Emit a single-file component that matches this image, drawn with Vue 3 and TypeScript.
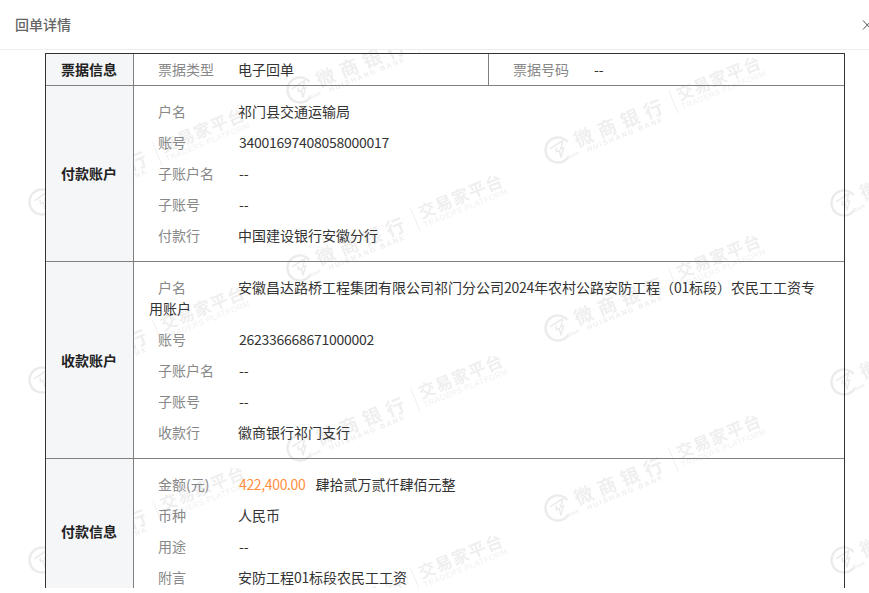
<script setup lang="ts">
interface Field {
  label: string
  value: string
}
interface Section {
  title: string
  fields: Field[]
}

const payer: Field[] = [
  { label: '户名', value: '祁门县交通运输局' },
  { label: '账号', value: '34001697408058000017' },
  { label: '子账户名', value: '--' },
  { label: '子账号', value: '--' },
  { label: '付款行', value: '中国建设银行安徽分行' },
]
const payee: Field[] = [
  { label: '账号', value: '262336668671000002' },
  { label: '子账户名', value: '--' },
  { label: '子账号', value: '--' },
  { label: '收款行', value: '徽商银行祁门支行' },
]
const sections: Section[] = [{ title: '付款账户', fields: payer }]

const marks: [number, number][] = [
  [300, 40], [558, 100], [844, 153],
  [42, 152], [300, 218], [558, 278], [844, 332],
  [42, 330], [300, 398], [558, 458], [844, 510],
  [42, 510], [300, 578],
]
const valueClass = (v: string) => ({
  num: /^[0-9]+$/.test(v),
  cjk: /^[^0-9-]/.test(v),
})
</script>

<template>
  <div class="dialog">
    <header class="head">
      <span class="title">回单详情</span>
      <svg class="close" width="7" height="12" viewBox="0 0 7 12" aria-label="关闭">
        <path d="M1 1.5L9.5 10.5M1 10.5L9.5 1.5" fill="none" stroke="#555" stroke-width="1" />
      </svg>
    </header>
    <main class="body">
      <svg class="marks" width="869" height="538" aria-hidden="true">
        <g v-for="(m, i) in marks" :key="i" :transform="`translate(${m[0]} ${m[1]}) rotate(-22)`">
          <circle r="12.5" fill="none" stroke="#ebebeb" stroke-width="2.4" stroke-dasharray="62 16" stroke-dashoffset="-12" />
          <path d="M-7-4L8-7L3 0L6 0L0 8L1 1L-2 1L-1-3" fill="none" stroke="#ebebeb" stroke-width="1.5" />
          <text class="m-small" x="6" y="12">Bank</text>
          <text class="m-big" x="19" y="5">微</text>
          <text class="m-big" x="44" y="5">商</text>
          <text class="m-big" x="69" y="5">银</text>
          <text class="m-big" x="94" y="5">行</text>
          <text class="m-latin" x="27" y="13" textLength="81">HUISHANG BANK</text>
          <path d="M125-14V11" stroke="#f0f0f0" stroke-width="1" />
          <text class="m-big2" x="131" y="0">交</text>
          <text class="m-big2" x="149" y="0">易</text>
          <text class="m-big2" x="167" y="0">家</text>
          <text class="m-big2" x="185" y="0">平</text>
          <text class="m-big2" x="203" y="0">台</text>
          <text class="m-latin2" x="131" y="9" textLength="90">TRADERS PLATFORM</text>
        </g>
      </svg>

      <div class="sheet">
        <section class="row">
          <div class="side">票据信息</div>
          <div class="cells">
            <div class="cell first">
              <span class="label">票据类型</span><span class="value cjk">电子回单</span>
            </div>
            <div class="cell second">
              <span class="label">票据号码</span><span class="value">--</span>
            </div>
          </div>
        </section>

        <section v-for="s in sections" :key="s.title" class="row">
          <div class="side">{{ s.title }}</div>
          <div class="list">
            <div v-for="f in s.fields" :key="f.label" class="item">
              <span class="label">{{ f.label }}</span><span class="value" :class="valueClass(f.value)">{{ f.value }}</span>
            </div>
          </div>
        </section>

        <section class="row">
          <div class="side">收款账户</div>
          <div class="list">
            <div class="item">
              <span class="label">户名</span><span class="value cjk">安徽昌达路桥工程集团有限公司祁门分公司<span class="num">2024</span>年农村公路安防工程（<span class="num">01</span>标段）农民工工资专用账户</span>
            </div>
            <div v-for="f in payee" :key="f.label" class="item">
              <span class="label">{{ f.label }}</span><span class="value" :class="valueClass(f.value)">{{ f.value }}</span>
            </div>
          </div>
        </section>

        <section class="row">
          <div class="side">付款信息</div>
          <div class="list">
            <div class="item">
              <span class="label">金额(元)</span><span class="amount num">422,400.00</span><span class="value">肆拾贰万贰仟肆佰元整</span>
            </div>
            <div class="item"><span class="label">币种</span><span class="value cjk">人民币</span></div>
            <div class="item"><span class="label">用途</span><span class="value">--</span></div>
            <div class="item">
              <span class="label">附言</span><span class="value cjk">安防工程<span class="num">01</span>标段农民工工资</span>
            </div>
          </div>
        </section>
      </div>
    </main>
  </div>
</template>

<style>
body {
  background: #fff;
}
</style>

<style scoped>
.dialog {
  width: 869px;
  height: 588px;
  overflow: hidden;
  display: flex;
  flex-direction: column;
  font-family: "Noto Sans CJK SC", "Noto Sans", sans-serif;
  font-size: 14px;
  line-height: 21px;
  color: #333;
  background: #fff;
}
.head {
  flex: none;
  height: 50px;
  box-sizing: border-box;
  border-bottom: 1px solid #eee;
  display: flex;
  justify-content: space-between;
  align-items: center;
  padding: 0 0 0 15px;
}
.title {
  font-weight: 500;
  color: #666;
}
.close {
  flex: none;
}
.body {
  position: relative;
  flex: 1;
  overflow: hidden;
  padding: 3px 0 0 45px;
}
.marks {
  position: absolute;
  left: 0;
  top: 0;
  filter: blur(0.35px);
}
.m-big,
.m-big2 {
  fill: #efefef;
  font-weight: 700;
  font-size: 19px;
}
.m-big2 {
  font-size: 17px;
}
.m-small,
.m-latin,
.m-latin2 {
  fill: #eeeeee;
  font-family: "Liberation Sans", sans-serif;
  font-weight: 700;
  font-size: 7px;
}
.m-small {
  font-size: 5px;
}
.m-latin2 {
  font-weight: 400;
  font-size: 8px;
  fill: #f0f0f0;
}
.sheet {
  position: relative;
  width: 800px;
  box-sizing: border-box;
  border: 1px solid #333;
}
.row {
  display: flex;
}
.row + .row {
  border-top: 1px solid #808080;
}
.side {
  flex: none;
  box-sizing: border-box;
  width: 88px;
  padding-right: 1px;
  border-right: 1px solid #808080;
  background: #f5f6f8;
  display: flex;
  align-items: center;
  justify-content: center;
  font-weight: 700;
  color: #222;
}
.cells {
  flex: 1;
  display: grid;
  grid-template-columns: 355px 1fr;
  height: 31px;
}
.cell {
  padding-left: 24px;
  line-height: 31px;
}
.cell.first {
  border-right: 1px solid #808080;
}
.cell.second {
  padding-left: 24px;
}
.cell .label {
  width: 81px;
  padding-left: 0;
}
.list {
  flex: 1;
  padding: 15px 18px 15px 15px;
  display: flex;
  flex-direction: column;
  gap: 10px;
}
.label {
  display: inline-block;
  box-sizing: border-box;
  width: 90px;
  padding-left: 9px;
  color: #888;
}
.value {
  color: #333;
}
.value.cjk {
  margin-left: -1px;
}
.num {
  letter-spacing: -0.27px;
}
.amount {
  color: #ff8f3f;
  letter-spacing: -0.35px;
  margin-right: 10px;
}
</style>
